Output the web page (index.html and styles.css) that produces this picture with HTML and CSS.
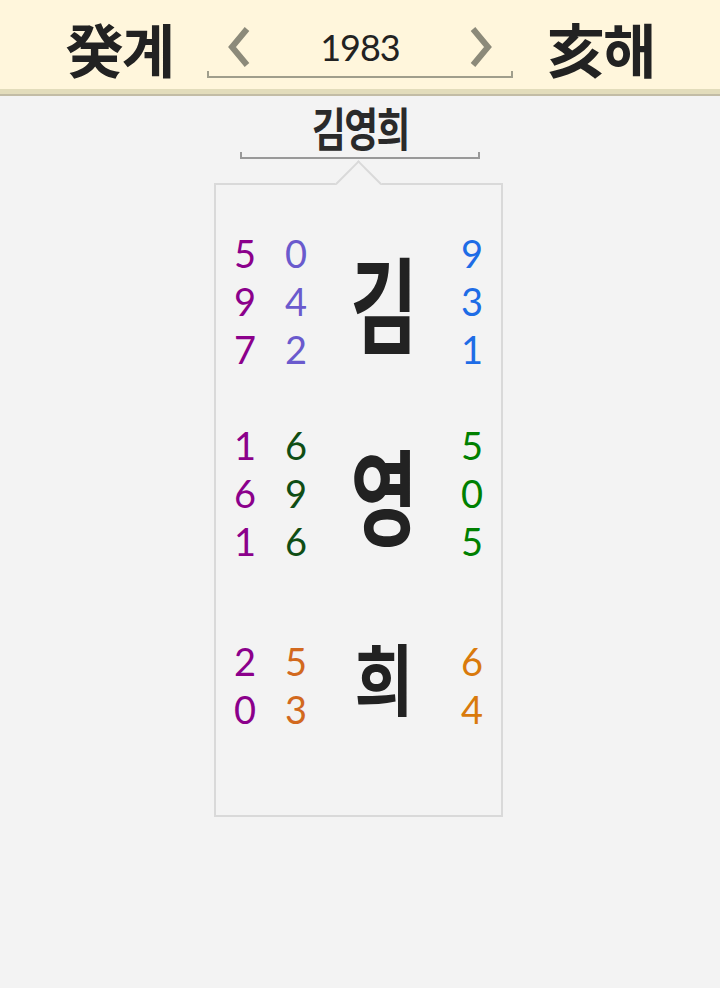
FILE: index.html
```html
<!DOCTYPE html>
<html lang="ko">
<head>
    <meta charset="UTF-8">
    <meta name="viewport" content="width=device-width, initial-scale=1.0">
    <title>이름 풀이</title>
    <link rel="stylesheet" href="styles.css">
</head>
<body>
    <div class="header">
        <div class="ganji">癸계</div>
        <div class="year-nav">
            <div class="year-row">
                <svg class="arrow" width="24" height="42" viewBox="0 0 24 42"><polyline points="20,3 5,21 20,39" fill="none" stroke="#8c8a7a" stroke-width="6"/></svg>
                <div class="year">1983</div>
                <svg class="arrow" width="24" height="42" viewBox="0 0 24 42"><polyline points="4,3 19,21 4,39" fill="none" stroke="#8c8a7a" stroke-width="6"/></svg>
            </div>
            <div class="bracket year-bracket"></div>
        </div>
        <div class="ganji">亥해</div>
    </div>

    <div class="name-box">
        <div class="name">김영희</div>
        <div class="bracket name-bracket"></div>
    </div>

    <div class="card">
        <div class="notch"></div>
        <div class="row">
            <div class="nums purple"><span>5</span><span>9</span><span>7</span></div>
            <div class="nums slate"><span>0</span><span>4</span><span>2</span></div>
            <div class="big">김</div>
            <div class="nums blue"><span>9</span><span>3</span><span>1</span></div>
        </div>
        <div class="row second">
            <div class="nums purple"><span>1</span><span>6</span><span>1</span></div>
            <div class="nums darkgreen"><span>6</span><span>9</span><span>6</span></div>
            <div class="big">영</div>
            <div class="nums green"><span>5</span><span>0</span><span>5</span></div>
        </div>
        <div class="row third">
            <div class="nums purple"><span>2</span><span>0</span></div>
            <div class="nums chocolate"><span>5</span><span>3</span></div>
            <div class="big">희</div>
            <div class="nums orange"><span>6</span><span>4</span></div>
        </div>
    </div>
</body>
</html>
```

FILE: styles.css
```css
*{
    margin: 0;
    padding: 0;
    box-sizing: border-box;
}
body{
    background: #f3f3f3;
    font-family: "Noto Sans CJK KR", "Noto Sans", sans-serif;
    color: #222;
}
.header{
    height: 94px;
    background: #fff6dc;
    border-bottom: 5px solid #e2dcbb;
    box-shadow: 0 2px 0 #c2bca5;
    display: flex;
    justify-content: center;
    align-items: flex-start;
    gap: 34px;
}
.ganji{
    font-size: 58px;
    font-weight: 700;
    line-height: 1;
    margin-top: 19px;
    letter-spacing: -2px;
}
.year-nav{
    width: 306px;
    margin-top: 26px;
    display: flex;
    flex-direction: column;
}
.year-row{
    height: 42px;
    display: flex;
    justify-content: space-between;
    align-items: center;
    padding: 0 20px;
}
.year{
    font-family: Lato, "Noto Sans", sans-serif;
    font-size: 36px;
    line-height: 42px;
    letter-spacing: -1px;
}
.bracket{
    height: 7px;
    border: 2px solid #a09e8c;
    border-top: none;
}
.year-bracket{
    margin-top: 3px;
}
.name-box{
    width: 240px;
    margin: 7px auto 0;
    display: flex;
    flex-direction: column;
    align-items: center;
}
.name{
    font-size: 46px;
    font-weight: 700;
    line-height: 50px;
    letter-spacing: -2px;
    color: #2a2a2a;
    transform: scaleX(0.8);
}
.name-bracket{
    width: 100%;
    border-color: #999;
    margin-top: 1px;
}
.card{
    position: relative;
    width: 289px;
    height: 634px;
    margin: 24px 0 0 calc(50% - 146px);
    border: 2px solid #d9d9d9;
    padding-top: 44px;
}
.notch{
    position: absolute;
    top: -18px;
    left: 126px;
    width: 33px;
    height: 33px;
    background: #f3f3f3;
    border-top: 2px solid #d9d9d9;
    border-left: 2px solid #d9d9d9;
    transform: rotate(45deg);
}
.row{
    display: grid;
    grid-template-columns: 26px 26px 1fr 26px;
    column-gap: 25px;
    padding: 0 16px;
}
.second{
    margin-top: 48px;
}
.third{
    margin-top: 72px;
}
.nums{
    display: flex;
    flex-direction: column;
    align-items: center;
    font-family: Lato, "Noto Sans", sans-serif;
    font-size: 38px;
    line-height: 48px;
}
.big{
    align-self: center;
    text-align: center;
    font-size: 104px;
    font-weight: 700;
    line-height: 1;
    transform: scaleX(0.7);
}
.third .big{
    align-self: start;
    font-size: 78px;
    transform: scaleX(0.82);
}
.purple{ color: #8b008b; }
.slate{ color: #6a5acd; }
.blue{ color: #1e6ce6; }
.darkgreen{ color: #0f4d14; }
.green{ color: #008000; }
.chocolate{ color: #d2691e; }
.orange{ color: #d97a0b; }
```
